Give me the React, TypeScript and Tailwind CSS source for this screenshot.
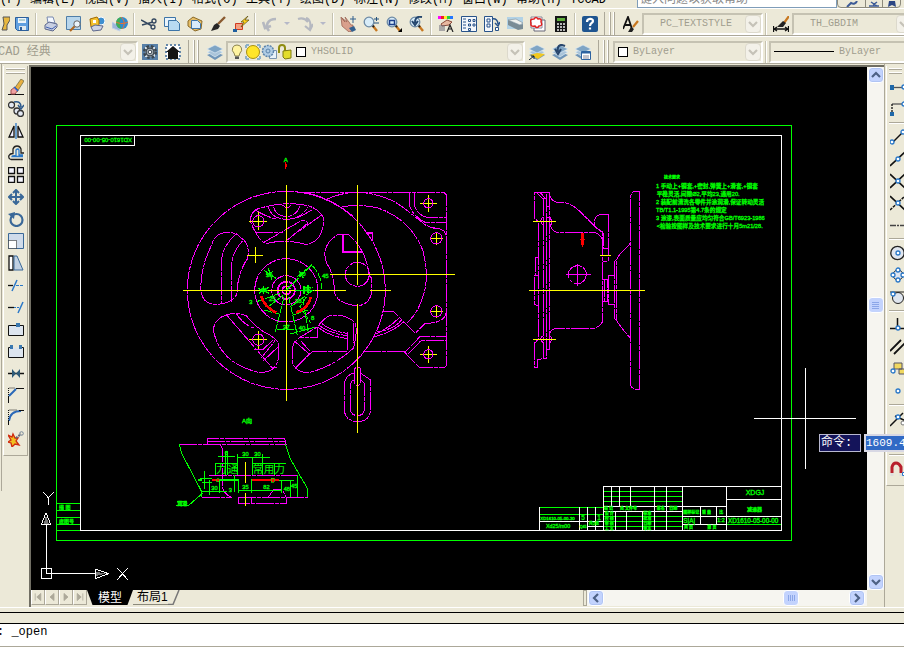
import React from "react";

const MENUS = ["编辑(E)", "视图(V)", "插入(I)", "格式(O)", "工具(T)", "绘图(D)", "标注(N)", "修改(M)", "窗口(W)", "帮助(H)"];

const Icon = ({ children }: { children: React.ReactNode }) => (
  <svg viewBox="0 0 16 16" className="block h-4 w-4 shrink-0" fill="none" aria-hidden="true">
    {children}
  </svg>
);

const lens = (
  <>
    <path d="M10 10l4 5" stroke="#c87820" strokeWidth="2.4" />
    <path d="M9 9l2 2" stroke="#222" strokeWidth="2" />
    <circle cx="6" cy="6" r="4.8" fill="#d8ecf8" stroke="#6d8aa5" strokeWidth="1.3" />
  </>
);

const sheets = (
  <>
    <path d="M0 11l8-3 8 3-8 5z" fill="#6f95b8" />
    <path d="M0 8l8-3 8 3-8 5z" fill="#a9c4da" stroke="#e8f1f8" strokeWidth=".6" />
    <path d="M0 5l8-4 8 4-8 4z" fill="#7fa5c5" stroke="#e8f1f8" strokeWidth=".6" />
  </>
);

const Snap = ({ x, y }: { x: number; y: number }) => (
  <circle cx={x} cy={y} r="2" fill="#fff" stroke="#2a78c8" strokeWidth="1.3" />
);

const icons: Record<string, React.ReactNode> = {
  sheet: <path d="M9 1h7v3l-3 5v5H8l2-6z" fill="#e8b840" stroke="#555" />,
  save: (
    <>
      <path d="M1.5 1.5h13v13h-11l-2-2z" fill="#5f9fe0" stroke="#2d5f9a" />
      <path d="M4 2h8v5H4z" fill="#eef5fb" />
      <path d="M5 10h7v4H5z" fill="#dfe8ee" />
      <path d="M6 11h2v3H6z" fill="#2d5f9a" />
      <path d="M5 4h6" stroke="#7aa" />
    </>
  ),
  plot: (
    <>
      <path d="M5 7l-1-6 6 0 2 6z" fill="#f4f8ff" stroke="#7a8ab0" />
      <path d="M2 9l4-3 8 2v3l-4 4-8-2z" fill="#c8cfe2" stroke="#5c678c" />
      <path d="M3 11l6 2 4-3" stroke="#4060b0" />
    </>
  ),
  preview: (
    <>
      <path d="M.5.5h14v13H.5z" fill="#b8d6ec" stroke="#4f7ea8" />
      <path d="M4 15l5-5" stroke="#b06820" strokeWidth="2.2" />
      <circle cx="11" cy="8" r="3.2" fill="#eaf4fb" stroke="#666" />
    </>
  ),
  publish: (
    <>
      <circle cx="12" cy="5" r="4" fill="#3f8fd0" stroke="#fff" />
      <path d="M1 3l7-2 2 3v6l-8 1z" fill="#f5c22e" stroke="#a26a00" />
      <path d="M4 4h3v3H4z" fill="#fff" />
      <path d="M2 11l4-2 8 1-2 4-8 1z" fill="#cfd4e4" stroke="#5c678c" />
    </>
  ),
  globe: (
    <>
      <path d="M0 6l8 4v5l-8-3z" fill="#9db6d8" stroke="#c6d4e8" />
      <circle cx="10" cy="7" r="6" fill="#2f8bd0" />
      <path d="M10 1a6 6 0 000 12c-3-4-3-8 0-12z" fill="#3fae55" />
      <path d="M4 6c4 2 8 2 12 0M9 1c4 3 4 9 1 12" stroke="#f07030" />
    </>
  ),
  cut: (
    <>
      <path d="M0 4l11 6M1 9l11-3" stroke="#33475f" strokeWidth="1.5" />
      <circle cx="13" cy="5" r="2" stroke="#33475f" strokeWidth="1.3" />
      <circle cx="12" cy="11" r="2" stroke="#33475f" strokeWidth="1.3" />
    </>
  ),
  copy: (
    <>
      <path d="M.5 1.5h11v9H.5z" fill="#eaf4fb" stroke="#3d75a8" />
      <path d="M4.500 4.500h8l3 3v7h-11z" fill="#b8daf2" stroke="#3d75a8" />
    </>
  ),
  paste: (
    <>
      <path d="M1 5l5-4 9 4-1 8-6 2-7-5z" fill="#e6bd66" stroke="#8a6a28" />
      <path d="M4.500 4.500h6l3 3v5h-9z" fill="#d8ecfa" stroke="#3d75a8" />
    </>
  ),
  brush: (
    <>
      <path d="M15 1L8 8" stroke="#8a5a30" strokeWidth="2.4" />
      <path d="M1 15l3-6 3-2 3 3-2 3z" fill="#262626" />
    </>
  ),
  match: (
    <>
      <path d="M2.500 7.500h7v6h-7z" fill="#f4a080" stroke="#d03a20" />
      <path d="M15 0L8 6h3l-3 5 8-7h-4z" fill="#ffd21a" stroke="#5a4a10" strokeWidth=".7" />
      <path d="M0 13h4v3H0z" fill="#1f5f9f" />
    </>
  ),
  undo: <path d="M7 15C3 10 5 3 14 3M1 6l2 6 6-2" stroke="#b5b8c0" strokeWidth="2.6" />,
  redo: <path d="M9 2C13 3 14 8 13 13M1 3q6-2 10 3M8 10l5 4 3-6" stroke="#b5b8c0" strokeWidth="2.2" />,
  pan: (
    <>
      <path d="M1 1l4 5-3-4 5 4-2-5 4 5 2 3 2 0-1 6-3 1-7-6z" fill="#d9a08c" stroke="#9c6656" strokeWidth=".8" />
      <path d="M9 12l5-2 2 4-4 2z" fill="#33608e" />
      <path d="M13 0v7M10 3h6" stroke="#33608e" />
    </>
  ),
  zoomrt: (
    <>
      {lens}
      <path d="M11 3h5M13.500 1v4M11 7h5" stroke="#24527e" />
    </>
  ),
  zoomwin: (
    <>
      {lens}
      <path d="M3.500 4.500h5v4h-5z" stroke="#1d3f8a" strokeWidth="1.5" />
      <path d="M16 12v4h-4z" fill="#000" />
    </>
  ),
  zoomprev: (
    <>
      {lens}
      <path d="M13 1C7 0 6 3 6 7M3 5l3 4 3-4" stroke="#24466e" strokeWidth="2" />
    </>
  ),
  props: (
    <>
      <path d="M0 0h3v3H0z" fill="#f0f" />
      <path d="M3 0h3v3H3z" fill="#e22" />
      <path d="M6 0h3v3H6z" fill="#fe2" />
      <path d="M9 0h3v3H9z" fill="#2c4" />
      <path d="M12 0h3v3h-3z" fill="#27f" />
      <path d="M3 8l6-4 5 2-3 3-7 1z" fill="#e7b8a0" stroke="#8a4a3a" />
      <path d="M1 10h6M1 12h6M1 14h6" stroke="#667" />
      <path d="M9 16l3-7 3 7M10 13h4" stroke="#222" strokeWidth="1.2" />
    </>
  ),
  center: (
    <>
      <path d="M.5.5h15v15H.5z" fill="#f4f7fb" stroke="#28538a" />
      <path d="M2 3h3M2 6h3M2 9h3M2 12h3" stroke="#28538a" />
      <path d="M7.500 3.500h2v2h-2zM12 3.500h2v2h-2zM7.500 8h2v2h-2zM12 8h2v2h-2zM7.500 12.500h2v2h-2z" stroke="#28538a" />
    </>
  ),
  palettes: (
    <>
      <path d="M.5.5h8v15h-8z" fill="#f4f7fb" stroke="#28538a" />
      <path d="M3 3h3v3H3zM3 8h3v3H3z" stroke="#28538a" />
      <path d="M8 3c4-1 6 2 6 5M11 7l3 3 2-4" stroke="#28538a" strokeWidth="1.5" />
      <path d="M11.500 11.500h3v3h-3z" fill="#fff" stroke="#28538a" />
    </>
  ),
  sheetset: (
    <>
      <path d="M0 1h16v12H0z" fill="#b2d2e6" />
      <path d="M1 4l12 5 3-1v5l-5 1L1 9z" fill="#7a8c96" />
      <path d="M1 4l8-1 7 4-3 2z" fill="#eef0ee" stroke="#7a8c96" strokeWidth=".6" />
    </>
  ),
  markup: (
    <>
      <path d="M4 4h11v11H4z" fill="#fff" stroke="#667" />
      <path d="M1 1h11v11H1z" fill="#fff" stroke="#889" />
      <path d="M4 3q2-3 4 0 4-1 3 3 2 4-2 4-2 3-4 0-5 1-4-3-2-4 3-4z" stroke="#e02020" strokeWidth="1.5" />
    </>
  ),
  calc: (
    <>
      <path d="M2 0h12v16H2z" fill="#161616" />
      <path d="M4 2h8v3H4z" fill="#5fae3c" />
      <path d="M4 8h8M4 11h8M4 14h8" stroke="#eee" strokeWidth="1.4" strokeDasharray="2 1" />
    </>
  ),
  help: (
    <>
      <rect width="16" height="16" rx="2" fill="#1f5590" />
      <path d="M5 6c0-4 6-4 6-1 0 2-3 2-3 5M8 11.500v2" stroke="#fff" strokeWidth="2.2" />
    </>
  ),
  textstyle: (
    <>
      <path d="M0 13L5 1l4 12M2 9h6" stroke="#111" strokeWidth="1.8" />
      <path d="M15 5l-5 6" stroke="#c87820" strokeWidth="2.2" />
      <path d="M5 16l3-5 3 2-2 3z" fill="#222" />
    </>
  ),
  dimstyle: (
    <>
      <path d="M16 0l-5 7" stroke="#c87820" strokeWidth="2.2" />
      <path d="M4 11l6-6 3 2-3 4z" fill="#222" />
      <path d="M.5 10v6M15.500 10v6M1 13h14M4 11l-3 2 3 2M12 11l3 2-3 2" stroke="#111" strokeWidth="1.3" />
    </>
  ),
  gear: (
    <>
      <path d="M0 0h16v16H0z" fill="#5880a8" />
      <path d="M3 3h10v10H3z" fill="#dfe5ea" />
      <circle cx="8" cy="8" r="5.800" stroke="#3a4650" strokeWidth="2.6" strokeDasharray="2.6 2" />
      <circle cx="8" cy="8" r="4" fill="#a8b0b6" stroke="#3a4650" strokeWidth="1.5" />
      <circle cx="8" cy="8" r="1.800" fill="#fff" stroke="#3a4650" />
    </>
  ),
  house: (
    <>
      <path d="M1 1h14v14H1z" fill="#fff" stroke="#6688aa" strokeWidth="2" strokeDasharray="2 2" />
      <path d="M8 2l7 6h-2v7H3V8H1z" fill="#151515" />
    </>
  ),
  layers: sheets,
  bulb: (
    <>
      <path d="M8 1a4.500 4.500 0 00-3 8l1 3h4l1-3a4.500 4.500 0 00-3-8z" fill="#fff3a0" stroke="#8c8450" />
      <path d="M6 12.500h4v2.500H6z" fill="#555" />
    </>
  ),
  sun: (
    <>
      <path d="M1 1h14v14H1z" stroke="#8cb0c8" strokeWidth="2" strokeDasharray="3 8 3 0" />
      <circle cx="8" cy="8" r="6.500" fill="#ffe52a" stroke="#a89010" />
    </>
  ),
  frozen: (
    <>
      <path d="M8.500 6.500h7v8h-7z" fill="#e8f2fa" stroke="#7a94b0" />
      <circle cx="7" cy="7" r="5.500" fill="#b0cce4" stroke="#5c84ac" strokeWidth="1.5" strokeDasharray="2 1" />
      <circle cx="7" cy="7" r="2" stroke="#5c84ac" />
    </>
  ),
  lock: (
    <>
      <path d="M2 9V4q0-3 3-3t3 3v4" stroke="#8f8c10" strokeWidth="2" />
      <path d="M6 7l8-1v8l-6 1-2-2z" fill="#e3dd2c" stroke="#7f7c10" />
    </>
  ),
  current: (
    <>
      {sheets}
      <path d="M1 11l7-2 8 1-7 5z" fill="#f2c81e" />
      <path d="M0 16l5-4M2 12h3v3" stroke="#123" />
    </>
  ),
  layprev: (
    <>
      {sheets}
      <path d="M13 2C7-1 5 3 6 8M3 5l3 5 3-5" stroke="#28466c" strokeWidth="2" />
    </>
  ),
  states: (
    <>
      {sheets}
      <path d="M6.500 7.500h9v8h-9z" fill="#fff" stroke="#2d62a0" />
      <path d="M7 8.500h8" stroke="#2d62a0" strokeWidth="2" />
      <path d="M8 12h6M8 14h6" stroke="#889" />
    </>
  ),

  erase: (
    <>
      <path d="M0 15.500h16" stroke="#111" />
      <path d="M6 10L13 0l3 2-7 11z" fill="#e8b040" stroke="#664" strokeWidth=".7" />
      <path d="M3 11l4-3 3 3-3 4-4 0z" fill="#f0a0a0" stroke="#a05050" />
      <path d="M6 8l4 4" stroke="#26c" strokeWidth="1.5" />
    </>
  ),
  copyobj: (
    <>
      <g fill="#e2e8f2" stroke="#333" strokeWidth="1.3">
        <circle cx="3.500" cy="4" r="3" />
        <circle cx="9" cy="10" r="3" />
        <circle cx="12.500" cy="12.500" r="3" />
      </g>
      <path d="M6 1c5-1 7 1 7 5M10 4l3 4 3-4" stroke="#2d5a8c" strokeWidth="1.5" />
    </>
  ),
  mirror: (
    <>
      <path d="M6 3v11H1zM10 3v11h5z" fill="#eef" stroke="#111" strokeWidth="1.3" />
      <path d="M8 0v16" stroke="#2a78c8" strokeWidth="1.3" />
    </>
  ),
  offset: (
    <>
      <path d="M15 14.500H3q-3-1-2-4 1-2 4-2V4q1-3 4-3t4 3v4h3" stroke="#222" strokeWidth="1.3" />
      <path d="M15 11.500H4q0-1 4-1V5q2-2 3 0v5h4" stroke="#2a78c8" strokeWidth="1.3" />
    </>
  ),
  array: <path d="M.5.5h6v6h-6zM9.500.5h6v6h-6zM.5 9.500h6v6h-6zM9.500 9.500h6v6h-6z" fill="#f6f6ff" stroke="#111" strokeWidth="1.3" />,
  move: <path d="M8 1v14M1 8h14M5 4l3-3 3 3M5 12l3 3 3-3M4 5L1 8l3 3M12 5l3 3-3 3" stroke="#3a6898" strokeWidth="2" />,
  rotate: (
    <>
      <circle cx="8.500" cy="9" r="6" stroke="#3a6898" strokeWidth="2.2" />
      <path d="M0 3l7-2-1 7z" fill="#3a6898" />
    </>
  ),
  scale: (
    <>
      <path d="M.5.5h15v15H.5z" fill="#cfdbea" stroke="#3a6898" />
      <path d="M.5 7.500h8v8h-8z" fill="#fff" stroke="#111" strokeDasharray="1 1" />
    </>
  ),
  stretch: (
    <>
      <path d="M1 1h4v14H1z" fill="#fff" stroke="#111" strokeWidth="1.3" />
      <path d="M6 1h3l6 14H6z" fill="#c0d0e2" stroke="#3a6898" />
    </>
  ),
  trim: (
    <>
      <path d="M0 8.500h5" stroke="#111" strokeWidth="1.3" />
      <path d="M4 14L9 3" stroke="#2a78c8" strokeWidth="1.5" />
      <path d="M8 8.500h8" stroke="#2a78c8" strokeDasharray="3 1" />
    </>
  ),
  extend: (
    <>
      <path d="M0 8.500h6" stroke="#111" strokeWidth="1.3" />
      <path d="M10 14l5-11" stroke="#2a78c8" strokeWidth="1.5" />
      <path d="M6 8.500h6" stroke="#2a78c8" strokeDasharray="2 1" />
    </>
  ),
  breakpt: (
    <>
      <path d="M.5 4.500h15v10H.5z" fill="#dde5ef" stroke="#111" />
      <path d="M8 2h4v4H8z" fill="#3a78b0" />
    </>
  ),
  breaktwo: (
    <>
      <path d="M2 4.500H.5v10h15v-10H14" fill="#dde5ef" stroke="#111" />
      <path d="M2 2h3v4H2zM11 2h3v4h-3z" fill="#3a78b0" />
    </>
  ),
  join: (
    <>
      <path d="M0 8.500h16" stroke="#111" strokeWidth="1.5" />
      <path d="M4 4l4 4.500L4 13zM12 4L8 8.500l4 4.500z" fill="#2d5a78" />
    </>
  ),
  chamfer: (
    <>
      <path d="M1 9l7-7" stroke="#2a68b8" strokeWidth="2" />
      <path d="M.5 16V9M8 1.500h8" stroke="#111" />
      <path d="M.5 8V1h7" stroke="#111" strokeDasharray="1 1" />
    </>
  ),
  fillet: (
    <>
      <path d="M1 12Q2 2 13 2" stroke="#2a68b8" strokeWidth="2" />
      <path d="M.5 16v-5M11 1.500h5" stroke="#111" />
      <path d="M.5 10V1h9" stroke="#111" strokeDasharray="1 1" />
    </>
  ),
  explode: (
    <>
      <path d="M0 4l4 2 1-3 2 4 3 0-2 3 3 4-4-1-3 3-1-4-3-1 3-2z" fill="#f0c020" stroke="#d02a10" strokeWidth="1.3" />
      <path d="M8 7l5-4" stroke="#667" strokeWidth="2" strokeDasharray="2 1" />
      <circle cx="13.500" cy="2.500" r="1.800" stroke="#789" />
    </>
  ),

  track: (
    <>
      <path d="M2 8.500h12" stroke="#555" strokeWidth="1.3" />
      <path d="M0 6h4v5H0z" fill="#1f68a8" />
      <Snap x={14} y={8} />
    </>
  ),
  from: (
    <>
      <path d="M2 3h12" stroke="#555" strokeWidth="1.3" />
      <path d="M2 3v9" stroke="#111" strokeWidth="1.3" strokeDasharray="2 1" />
      <path d="M0 11h4v4H0z" fill="#1f68a8" />
      <Snap x={14} y={3} />
    </>
  ),
  endpoint: (
    <>
      <path d="M3 13L14 2" stroke="#111" strokeWidth="1.5" />
      <Snap x={2} y={13} />
      <Snap x={13} y={3} />
    </>
  ),
  midpoint: (
    <>
      <path d="M0 15L15 1" stroke="#111" strokeWidth="1.7" />
      <Snap x={8} y={8} />
    </>
  ),
  intersect: (
    <>
      <path d="M0 1l15 14M0 15L15 1" stroke="#111" strokeWidth="1.7" />
      <Snap x={8} y={8} />
    </>
  ),
  apparent: (
    <>
      <path d="M0 1l15 14" stroke="#111" strokeWidth="1.7" />
      <path d="M0 15L15 1" stroke="#111" strokeWidth="1.5" strokeDasharray="3 1" />
      <Snap x={8} y={8} />
    </>
  ),
  extension: <path d="M0 8.500h16" stroke="#444" strokeWidth="1.5" strokeDasharray="6 1 2 1" />,
  centre: (
    <>
      <circle cx="7.500" cy="8" r="6.700" fill="#dfe5ee" stroke="#222" strokeWidth="1.3" />
      <Snap x={8} y={8} />
    </>
  ),
  quadrant: (
    <>
      <circle cx="8" cy="8" r="5" fill="#dfe5ee" stroke="#222" />
      <Snap x={8} y={3} />
      <Snap x={8} y={13} />
      <Snap x={3} y={8} />
      <Snap x={13} y={8} />
    </>
  ),
  tangent: (
    <>
      <circle cx="8" cy="9" r="5.500" fill="#dfe5ee" stroke="#222" />
      <path d="M0 3h14" stroke="#222" />
      <Snap x={3} y={5} />
    </>
  ),
  perp: (
    <>
      <path d="M0 11.500h16M7.500 1v10" stroke="#111" strokeWidth="1.5" />
      <Snap x={8} y={11} />
    </>
  ),
  parallel: <path d="M0 12L11 1M4 15L15 4" stroke="#111" strokeWidth="1.8" />,
  insert: (
    <>
      <path d="M4 2h8v6H4zM9 8h6v5H9z" fill="#f0d860" stroke="#556" />
      <Snap x={3} y={10} />
    </>
  ),
  node: <Snap x={8} y={8} />,
  nearest: (
    <>
      <path d="M0 15L13 2M5 5l11 5" stroke="#111" strokeWidth="1.5" />
      <circle cx="13" cy="12" r="2" fill="#fff" stroke="#777" />
      <Snap x={8} y={6} />
    </>
  ),
  none: <circle cx="8" cy="8" r="5" fill="#ddd" stroke="#777" />,
  magnet: (
    <>
      <path d="M2 12V6q1-4 4-4t5 4v6" stroke="#b8202c" strokeWidth="3" />
      <path d="M.5 13.500h3M9.500 13.500h3" stroke="#ddd" strokeWidth="3" />
      <path d="M12.500 11.500h3v3h-3z" fill="#fff" stroke="#2a78c8" />
    </>
  ),
};

const ToolButton = ({ name, small }: { name: string; small?: boolean }) => (
  <button
    type="button"
    aria-label={name}
    className={small ? "flex h-[22px] w-4 shrink-0 items-center" : "flex h-[22px] w-[23px] shrink-0 items-center justify-center"}
  >
    <Icon>{icons[name]}</Icon>
  </button>
);

const Sep = () => (
  <div className="flex h-[22px] w-[6px] shrink-0 justify-center">
    <div className="w-[2px] border-l border-r border-l-[#c5c2b0] border-r-white" />
  </div>
);

const Grip = () => (
  <div className="flex h-full shrink-0 gap-[2px] border-l border-[#aca899] pl-1 pr-1">
    <div className="w-[2px] border-l border-r border-l-white border-r-[#aca899]" />
    <div className="w-[2px] border-l border-r border-l-white border-r-[#aca899]" />
  </div>
);

const MenuArrow = () => (
  <svg viewBox="0 0 6 3" className="h-[3px] w-[6px]" aria-hidden="true">
    <path d="M0 0h6L3 3z" fill="#b5b8c8" />
  </svg>
);

const Chevron = ({ color = "#c5c2b8", turn = "" }: { color?: string; turn?: string }) => (
  <svg viewBox="0 0 10 10" className={`h-[10px] w-[10px] ${turn}`} fill="none" aria-hidden="true">
    <path d="M1 3l4 4 4-4" stroke={color} strokeWidth="2.2" />
  </svg>
);

type DropProps = { label: string; value: string; width: string; pad: string; text?: string; children?: React.ReactNode };

const Drop = ({ label, value, width, pad, text = "text-[10px]", children }: DropProps) => (
  <div className={`relative flex h-[22px] shrink-0 items-center ${width}`}>
    <select
      aria-label={label}
      defaultValue={value}
      className={`h-[22px] w-full appearance-none border-2 border-b-white border-l-[#c5c2b2] border-r-white border-t-[#c5c2b2] bg-[#ece9d8] font-['Liberation_Mono','Noto_Sans_CJK_SC',monospace] text-[#a09d8e] outline-none ${text} ${pad}`}
    >
      <option>{value}</option>
    </select>
    {children && <div className="pointer-events-none absolute left-[3px] flex items-center">{children}</div>}
    <span className="pointer-events-none absolute right-[2px] flex h-[18px] w-4 items-center justify-center rounded-sm border border-[#dcd9cc] bg-[#f3f1e9]">
      <Chevron />
    </span>
  </div>
);

const Cross = ({ x, y, r = 20, hole = 0 }: { x: number; y: number; r?: number; hole?: number }) => (
  <>
    <path d={`M${x - r} ${y}h${r * 2}M${x} ${y - r}v${r * 2}`} stroke="#ff0" />
    {hole > 0 && <circle cx={x} cy={y} r={hole} stroke="#f0f" />}
  </>
);

const FrontView = () => (
  <svg x="180" y="150" width="290" height="290" viewBox="0 0 870 870" overflow="visible">
    <g stroke="#f0f" strokeWidth="3" strokeDasharray="54 3 12 3">
      <circle cx="319" cy="421" r="297" />
      <circle cx="319" cy="421" r="95" />
      <circle cx="319" cy="421" r="44" />
      <circle cx="319" cy="421" r="26" strokeWidth="5" />
      <circle cx="319" cy="421" r="12" strokeWidth="5" />
      <path d="M350 127H792L799 134V645Q799 652 792 652H718L674 607L720 560H799M684 612L724 571H799" />
      <path d="M440 148Q480 128 532 127Q620 130 682 182L738 226" />
      <path d="M480 172Q530 160 590 173Q690 205 728 300Q752 390 723 455Q710 493 680 520" />
      <path d="M370 127Q450 140 520 200" />
      <path d="M688 127V165Q698 198 735 217H799M703 127V165Q712 194 740 202H799" />
      <path d="M740 226Q755 236 775 235Q797 240 799 262" />
      <path d="M607 484H640L706 550L735 520Q797 520 799 484M665 510Q640 540 590 545M658 503Q630 532 588 552M670 516Q640 545 582 561M550 604H674" />
      <path d="M211 215Q210 178 250 172Q320 153 385 167Q432 185 431 215Q425 280 375 283Q320 266 262 280Q240 282 211 215Z" />
      <path d="M265 172Q275 207 319 208Q362 208 383 172M280 170Q288 198 319 200Q350 198 360 168M308 165Q321 180 334 165M225 178Q245 195 290 208M350 205Q380 190 400 177" />
      <path d="M250 278L360 214Q380 206 383 220L322 270M425 195L355 245M225 247H310" />
      <path d="M148 247Q105 245 95 285Q62 350 62 421Q68 462 105 463Q160 462 171 430Q172 370 203 325Q210 280 185 265Q170 248 148 247Z" />
      <path d="M170 250Q125 290 124 340V460M188 272Q155 310 154 350V455" />
      <path d="M165 490Q105 495 100 540Q120 640 235 667Q290 670 296 620V580Q285 560 250 545Q215 520 200 498Q180 490 165 490Z" />
      <path d="M140 495L275 652H290M170 492Q190 525 225 535M243 625L285 572M250 632L295 590M222 597H250L282 568" />
      <path d="M345 575Q335 580 338 640Q350 670 390 667Q460 650 520 595Q535 540 524 517Q495 490 450 497Q430 505 413 530L360 562Z" />
      <path d="M413 530V562H360M418 527Q450 550 500 557M425 520Q455 545 502 550M415 533Q450 560 500 565M503 545V600M520 520V580" />
      <path d="M345 575L388 612L348 652M362 572L388 602M388 612L400 604H500" />
      <path d="M475 253H505Q560 300 567 375L575 385V430Q565 467 530 467Q465 460 463 421Q462 370 440 340Q420 285 475 253Z" />
      <circle cx="532" cy="373" r="36" />
      <rect x="523" y="652" width="19" height="54" rx="9" />
      <path d="M542 670L572 690V780Q568 815 532 815Q495 812 493 780V700Q500 672 523 670" />
      <path d="M542 690L553 700V780Q550 797 532 797Q513 795 511 780V705Q515 690 523 690" />
    </g>
    <path d="M489 253V306H548M558 248H577V273" stroke="#f0f" strokeWidth="5" />
    <g stroke="#ff0" strokeWidth="3">
      <path d="M319 105V752M532 105V404M532 462V848M9 421H497M569 421H632M450 373H825" />
      <Cross x={745} y={160} r={26} hole={14} />
      <Cross x={769} y={265} hole={17} />
      <Cross x={769} y={484} hole={17} />
      <Cross x={745} y={613} r={26} hole={14} />
      <Cross x={235} y={214} r={27} hole={17} />
      <Cross x={235} y={569} r={27} hole={17} />
      <Cross x={226} y={316} r={24} />
    </g>
    <g stroke="#0f0" strokeWidth="3" strokeDasharray="24 4">
      <path d="M319 421L395 345Q426 375 424 418M312 440L285 548M326 440L352 556M290 538H350M230 455L300 430M335 468L400 420M268 468L315 432" />
      <path d="M368 440L385 548M380 440L360 470L392 518M330 552L404 532M340 495L385 480M252 480L300 493M345 421H405" />
      <path d="M253 362L288 385M258 375L283 362M265 355L276 390M352 380L383 355M358 362L372 388" />
      <path d="M234 415L268 430M236 430L266 412M250 408V436M240 421H266M372 408V435M384 404V430M368 412H398" strokeWidth="4" />
    </g>
    <path d="M243 437Q252 470 288 488M348 488Q385 475 393 440" stroke="#f00" strokeWidth="8" />
    <path d="M317 35V56M320 42V52" stroke="#f00" strokeWidth="3" />
    <g fill="#0f0" stroke="#0f0" fontSize="18">
      <text x="311" y="35">A</text>
      <text x="186" y="818">A向</text>
      <text x="426" y="384">45</text>
      <text x="207" y="463">3</text>
      <text x="309" y="537">37</text>
      <text x="356" y="539">40</text>
      <text x="393" y="511">8</text>
      <text x="345" y="459">38</text>
      <text x="267" y="452">25</text>
      <text x="257" y="380">30</text>
      <text x="357" y="378">30</text>
      <text x="241" y="427">46</text>
      <text x="373" y="423">12</text>
    </g>
  </svg>
);

const SideView = () => (
  <svg x="510" y="120" width="290" height="280" viewBox="0 0 870 840" overflow="visible">
    <g stroke="#f0f" strokeWidth="3" strokeDasharray="54 3 12 3">
      <path d="M118 217H73V295L85 304V658L73 670V742H82V718H92L95 715H109V217M100 235V715M118 217V688H109M109 235H97L82 220M90 217L106 235M109 259H118" />
      <path d="M97 292L91 304L100 317M97 648L91 658L100 670M109 292H120Q126 300 124 315M118 645L126 655L120 669" />
      <path d="M118 225Q125 243 140 247H163Q190 255 205 270L262 326Q279 332 278 355V545M118 300Q122 333 140 337H245Q270 338 278 360" />
      <path d="M268 333Q281 330 281 350V385M295 283H270Q250 290 253 315L262 327M295 283V424H278M278 385H295" />
      <path d="M118 640Q125 628 137 625H250Q276 620 278 600V545H293V478H278M295 466V553H313M295 466H313M282 478V545" />
      <path d="M85 412H76V466H73V553L85 557M76 466H85" />
      <path d="M313 424V595L319 600V420L313 424M319 420Q325 405 340 392L361 370M319 600Q330 620 361 654" />
      <path d="M361 795V230Q365 215 375 214H388V808H378Q363 803 361 795Z" />
      <circle cx="202" cy="464" r="27" />
    </g>
    <path d="M168 463H243M202 432V498" stroke="#f0f" strokeWidth="3" />
    <path d="M57 511H405M69 304H138M69 658H138M270 406H303" stroke="#ff0" strokeWidth="3" />
    <path d="M217 339V374" stroke="#f00" strokeWidth="9" />
    <path d="M210 359H225M217 374V381" stroke="#f00" strokeWidth="4" />
    <g fill="#0f0" stroke="#0f0" fontSize="17">
      <text x="462" y="178" fontSize="12">技术要求</text>
      <text x="438" y="203">1 手动上+铜套,+密封,弹簧上+滑套,+铜套</text>
      <text x="440" y="227">平稳灵活,间隙Ø2,平均23,通用20.</text>
      <text x="438" y="251">2 装配前清洗各零件并涂润滑,保证转动灵活</text>
      <text x="438" y="276">TB/T1.1-1995第4.7条的规定</text>
      <text x="438" y="300">3 涂漆,表面质量应均匀符合GB/T6923-1986</text>
      <text x="440" y="324">&lt;检验按图样及技术要求进行十月5m21/28.</text>
    </g>
  </svg>
);

const DetailView = () => (
  <svg x="160" y="410" width="170" height="110" viewBox="0 0 510 330" overflow="visible">
    <path
      d="M142 103V85H374L378 103M142 94H376M58 103H380M180 103Q190 115 188 135V235Q195 255 215 262M148 196H415M125 262H215M235 262H443M235 262V280H379V262M274 262V280M325 262L340 239H367L379 262"
      stroke="#f0f"
      strokeWidth="3"
      strokeDasharray="54 3 12 3"
    />
    <path d="M58 103L65 130L125 245V262M376 103L390 145L442 235V262M130 248L86 286H48M51 275H82" stroke="#0f0" strokeWidth="3" />
    <path
      d="M174 139H225M196 124V196M203 124V196M166 160V196M166 160H232M232 133V196M232 142H330M277 142V196M308 133V196M277 160H378M343 160V196M119 206H155M133 184V236M125 217H155M148 210V254M178 206V248M127 244H200M224 196V245M235 210V250M235 242H365M274 208V250M364 211V248M355 211H402M391 211V262M412 196V262"
      stroke="#0f0"
      strokeWidth="3"
    />
    <path d="M178 210H236M115 210H125" stroke="#0f0" strokeWidth="6" />
    <path d="M155 211H178M275 210H357" stroke="#f00" strokeWidth="6" />
    <path d="M170 206h8v9h-8zM334 205h8v12h-8z" stroke="#0f0" strokeWidth="2" fill="#f00" />
    <path d="M256 156V218M256 249V288" stroke="#ff0" strokeWidth="3" />
    <g fill="#0f0" stroke="#0f0" fontSize="17">
      <text x="247" y="137">30</text>
      <text x="283" y="137">30</text>
      <text x="194" y="136">6</text>
      <g fontSize="32" strokeWidth="0">
        <text x="168" y="190">力</text>
        <text x="203" y="190">通</text>
        <text x="278" y="190">常</text>
        <text x="311" y="190">用</text>
        <text x="343" y="190">力</text>
      </g>
      <text x="154" y="239">30</text>
      <text x="206" y="246">3</text>
      <text x="247" y="237">35</text>
      <text x="310" y="237">82</text>
      <text x="371" y="242">48</text>
      <text x="393" y="234">45</text>
      <text x="52" y="285" fontSize="15">润滑</text>
    </g>
  </svg>
);

const TitleBlock = () => (
  <svg x="530" y="470" width="270" height="80" viewBox="0 0 810 240" overflow="visible">
    <path
      d="M220 64H457M220 79H457M220 94H457M220 139H457M220 154H457M220 169H457M589 163H754M28 112H220M28 133H220"
      stroke="#0f0"
      strokeWidth="3"
    />
    <path
      d="M220 49H754M220 49V181M244 49V109M268 49V109M301 49V109M373 49V181M409 49V181M457 49V181M589 49V181M754 49V181M220 109H589M589 88H754M220 124H457M457 139H754M457 163H589M256 124V181M289 124V181M337 124V181M511 109V163M559 109V163M28 112V181M148 112V181M172 112V181M196 112V181M28 154H220M172 169H220"
      stroke="#fff"
      strokeWidth="3"
    />
    <g fill="#0f0" stroke="#0f0" fontSize="12">
      <text x="647" y="76" fontSize="21">XDGJ</text>
      <text x="651" y="124" fontSize="15">减速器</text>
      <text x="594" y="158" fontSize="19">XD1610-05-00-00</text>
      <text x="31" y="150" fontSize="13">XD1610-05-00-30</text>
      <text x="48" y="175" fontSize="16">Xd25/m00</text>
      <text x="154" y="150" fontSize="19">5</text>
      <text x="202" y="150" fontSize="19">1</text>
      <text x="149" y="173" fontSize="11">Q45</text>
      <text x="176" y="166">共2张</text>
      <text x="222" y="121">标 记</text>
      <text x="270" y="121">处 文件号</text>
      <text x="380" y="121">签名</text>
      <text x="418" y="121">日期</text>
      <text x="224" y="136">设 计</text>
      <text x="224" y="151">校 核</text>
      <text x="224" y="166">审 核</text>
      <text x="224" y="179">工 艺</text>
      <text x="340" y="136">标准</text>
      <text x="340" y="151">批准</text>
      <text x="340" y="166">日期</text>
      <text x="340" y="179">审定</text>
      <text x="460" y="131">图样标记</text>
      <text x="516" y="131">重 量</text>
      <text x="568" y="131">比</text>
      <text x="460" y="158" fontSize="19">S|A|</text>
      <text x="562" y="157" fontSize="16">1:2</text>
      <text x="462" y="178">共 页</text>
      <text x="532" y="178">第 页</text>
    </g>
  </svg>
);

const UcsIcon = () => (
  <svg x="0" y="480" width="240" height="170" viewBox="0 0 720 510" overflow="visible">
    <path
      d="M139 280V133M139 280H286M124 265H155V296H124ZM124 133L138 98L152 133ZM286 267V296L325 281ZM129 36L145 53L161 36M145 53V75M352 264L383 299M383 264L352 299"
      stroke="#fff"
      strokeWidth="3"
    />
    <path d="M138 105L146 131H132ZM288 275L318 281L288 288Z" fill="#777" />
  </svg>
);

const Drawing = () => (
  <svg
    viewBox="31 67 836 523"
    preserveAspectRatio="xMinYMin meet"
    className="block h-full w-full font-['Liberation_Sans','Noto_Sans_CJK_SC',sans-serif]"
    fill="none"
    shapeRendering="crispEdges"
    role="img"
    aria-label="XD1610-05-00-00"
  >
    <path d="M56 125.500H791.500V540.500H56.500V125M57 503.500H80M57 510.500H80M57 517.500H80M57 524.500H80M57 530.500H80" stroke="#0f0" />
    <path d="M80.500 135.500H781.500V530.500H80.500V135M80 145.500H134.500V135" stroke="#fff" />
    <g fill="#0f0" stroke="#0f0" strokeWidth="0.300" fontSize="6">
      <text transform="translate(132 138) rotate(180)">XD1610-05-00-00</text>
      <text x="59" y="509" fontSize="5">描 图</text>
      <text x="59" y="523" fontSize="5">底图号</text>
    </g>
    <FrontView />
    <SideView />
    <DetailView />
    <TitleBlock />
    <UcsIcon />
    <path d="M754 418.500H856M805.500 368V469" stroke="#fff" />
  </svg>
);

const ScrollButton = ({ label, turn }: { label: string; turn: string }) => (
  <button
    type="button"
    aria-label={label}
    className="flex h-4 w-4 shrink-0 items-center justify-center rounded-sm border border-white bg-[#c3d3fd] shadow-[inset_0_0_0_1px_#b0c4f4]"
  >
    <Chevron color="#4d6185" turn={turn} />
  </button>
);

const LEFT_TOOLS = [
  "erase", "copyobj", "mirror", "offset", "array", "move", "rotate", "scale", "stretch",
  "trim", "extend", "breakpt", "breaktwo", "join", "chamfer", "fillet", "explode",
];

const RIGHT_TOOLS = [
  ["track", "from"],
  ["endpoint", "midpoint", "intersect", "apparent", "extension"],
  ["centre", "quadrant", "tangent"],
  ["perp", "parallel", "insert", "node"],
  ["nearest", "none"],
  ["magnet"],
];

const RowGrip = () => (
  <div className="flex h-[10px] shrink-0 flex-col gap-[2px] px-[2px] pt-[2px]">
    <div className="h-[2px] border-b border-t border-b-[#aca899] border-t-white" />
    <div className="h-[2px] border-b border-t border-b-[#aca899] border-t-white" />
  </div>
);

const MenuBar = () => (
  <div className="flex h-2 shrink-0 items-end overflow-hidden font-['Liberation_Mono','Noto_Sans_CJK_SC',monospace] text-[12px] leading-4 text-black">
    <button type="button" className="w-[30px] shrink-0 whitespace-nowrap text-left">(F)</button>
    {MENUS.map((menu) => (
      <button key={menu} type="button" className="w-[54px] shrink-0 whitespace-nowrap text-left">
        {menu}
      </button>
    ))}
    <button type="button" className="w-[67px] shrink-0 whitespace-nowrap text-left">YCCAD</button>
    <input
      aria-label="帮助"
      placeholder="键入问题以获取帮助"
      className="h-4 w-[200px] shrink-0 border border-[#7f9db9] bg-white px-[2px] text-[12px] placeholder:text-[#8a8a8a]"
    />
    <div className="flex h-4 shrink-0 rounded-b-sm border border-[#8c8a7c]">
      <button type="button" aria-label="搜索" className="flex w-7 items-end justify-center border-r border-[#8c8a7c]">
        <svg viewBox="0 0 12 6" className="h-[6px] w-3" aria-hidden="true">
          <path d="M1 6l4-4q4 2 6-2" stroke="#3c5a96" strokeWidth="2" fill="none" />
        </svg>
      </button>
      <button type="button" aria-label="通讯中心" className="flex w-[17px] items-end justify-center border-r border-[#8c8a7c]">
        <svg viewBox="0 0 12 6" className="h-[6px] w-3" aria-hidden="true">
          <path d="M1 5h10M3 1l6 4M9 1L5 4" stroke="#3c5a96" strokeWidth="1.5" />
        </svg>
      </button>
      <button type="button" aria-label="收藏夹" className="flex w-[17px] items-end justify-center">
        <svg viewBox="0 0 12 6" className="h-[6px] w-3" aria-hidden="true">
          <path d="M2 6l1-6h6l1 6-4-2z" fill="#2c4684" />
        </svg>
      </button>
    </div>
  </div>
);

const StandardBar = () => (
  <div className="flex h-7 shrink-0 items-center overflow-hidden border-b border-t border-b-[#aca899] border-t-white pt-[3px]">
    <div className="flex w-[10px] shrink-0 justify-end overflow-hidden">
      <ToolButton name="sheet" small />
    </div>
    <ToolButton name="save" />
    <Sep />
    {["plot", "preview", "publish", "globe"].map((n) => <ToolButton key={n} name={n} />)}
    <Sep />
    {["cut", "copy", "paste", "brush", "match"].map((n) => <ToolButton key={n} name={n} />)}
    <Sep />
    <ToolButton name="undo" />
    <button type="button" aria-label="undo list" className="flex w-3 shrink-0 justify-center">
      <MenuArrow />
    </button>
    <ToolButton name="redo" />
    <button type="button" aria-label="redo list" className="flex w-[14px] shrink-0 justify-center">
      <MenuArrow />
    </button>
    <Sep />
    {["pan", "zoomrt", "zoomwin", "zoomprev"].map((n) => <ToolButton key={n} name={n} />)}
    <Sep />
    {["props", "center", "palettes", "sheetset", "markup", "calc"].map((n) => <ToolButton key={n} name={n} />)}
    <Sep />
    <ToolButton name="help" />
    <div className="w-[3px] shrink-0" />
    <Grip />
    <ToolButton name="textstyle" />
    <Drop label="文字样式" value="PC_TEXTSTYLE" width="w-[121px]" pad="pl-4" />
    <Sep />
    <ToolButton name="dimstyle" />
    <Drop label="标注样式" value="TH_GBDIM" width="w-[122px]" pad="pl-4" />
  </div>
);

const LayerBar = () => (
  <div className="flex h-7 shrink-0 items-center overflow-hidden border-b border-t border-b-[#aca899] border-t-white pt-[3px]">
    <Drop label="工作空间" value="CAD 经典" width="-ml-1 w-[142px]" pad="pl-0" text="text-[12px]" />
    <ToolButton name="gear" />
    <ToolButton name="house" />
    <div className="w-1 shrink-0" />
    <Grip />
    <ToolButton name="layers" />
    <Drop label="图层" value="YHSOLID" width="w-[299px]" pad="pl-[83px]">
      <Icon>{icons.bulb}</Icon>
      <Icon>{icons.sun}</Icon>
      <Icon>{icons.frozen}</Icon>
      <Icon>{icons.lock}</Icon>
      <span className="ml-[3px] h-[10px] w-[10px] border border-black bg-white" />
    </Drop>
    {["current", "layprev", "states"].map((n) => <ToolButton key={n} name={n} />)}
    <div className="w-1 shrink-0" />
    <Grip />
    <Drop label="颜色" value="ByLayer" width="w-[150px]" pad="pl-[18px]">
      <span className="ml-[2px] h-[10px] w-[10px] border border-black bg-white" />
    </Drop>
    <Sep />
    <Drop label="线型" value="ByLayer" width="w-[170px]" pad="pl-[68px]">
      <span className="ml-[2px] h-px w-[60px] bg-black" />
    </Drop>
  </div>
);

const LayoutTabs = () => (
  <div className="flex h-[17px] shrink-0 items-start bg-[#ece9d8]">
    <div className="flex shrink-0">
      {["M4 3v9M11 3v9L6 7.500z", "M10 3v9L5 7.500z", "M5 3v9l5-4.500z", "M4 3v9l5-4.500zM11 3v9"].map((d) => (
        <button key={d} type="button" aria-label="tab" className="h-[15px] w-[14px] border-b border-l border-r border-[#aca899] border-l-white">
          <svg viewBox="0 0 15 15" className="h-full w-full" aria-hidden="true">
            <path d={d} fill="#aca899" stroke="#aca899" />
          </svg>
        </button>
      ))}
    </div>
    <button
      type="button"
      className="h-[15px] w-[46px] shrink-0 bg-black text-center text-[12px] leading-[14px] text-white [clip-path:polygon(0_0,100%_0,88%_100%,12%_100%)]"
    >
      模型
    </button>
    <button type="button" className="h-[15px] shrink-0 border-b border-[#8c8a7c] pl-1 text-[12px] leading-[14px] text-black">
      布局1
    </button>
    <svg viewBox="0 0 12 15" className="h-[15px] w-3 shrink-0" aria-hidden="true">
      <path d="M0 14.500h5L11 0" stroke="#777" fill="none" strokeWidth="1.5" />
    </svg>
    <div className="flex-1" />
    <div className="flex w-[284px] shrink-0 items-center bg-[#f6f5f0]">
      <div className="mr-px h-4 w-1 border border-[#aca899] bg-[#ece9d8]" />
      <ScrollButton label="left" turn="rotate-90" />
      <div className="flex-1" />
      <div className="flex h-4 w-4 items-center justify-center gap-px rounded-sm border border-white bg-[#c3d3fd]">
        <span className="h-[6px] w-px bg-[#8ba6e8]" />
        <span className="h-[6px] w-px bg-[#8ba6e8]" />
        <span className="h-[6px] w-px bg-[#8ba6e8]" />
        <span className="h-[6px] w-px bg-[#8ba6e8]" />
      </div>
      <div className="w-[50px]" />
      <ScrollButton label="right" turn="-rotate-90" />
      <div className="w-[2px]" />
    </div>
    <div className="w-[17px] shrink-0" />
  </div>
);

const App: React.FC = () => {
  return (
    <div className="flex h-screen w-full flex-col overflow-hidden bg-[#ece9d8] font-['Liberation_Sans','Noto_Sans_CJK_SC',sans-serif]">
      <MenuBar />
      <StandardBar />
      <LayerBar />

      <main className="relative flex min-h-0 flex-1">
        <div className="w-[29px] shrink-0 pl-px">
          <div className="flex flex-col border-l border-[#aca899] pb-[35px] pl-px pt-[2px]">
            <div className="flex w-[25px] flex-col items-center border-b border-l border-r border-b-[#aca899] border-l-white border-r-[#aca899] pb-[5px]">
              <div className="w-full">
                <RowGrip />
              </div>
              {LEFT_TOOLS.map((n) => <ToolButton key={n} name={n} />)}
            </div>
          </div>
        </div>

        <div className="mt-px flex min-w-0 flex-1 flex-col border-l-2 border-t-2 border-[#716f64]">
          <div className="flex min-h-0 flex-1">
            <div className="min-w-0 flex-1 overflow-hidden bg-black">
              <Drawing />
            </div>
            <div className="flex w-[17px] shrink-0 flex-col items-center bg-[#f6f5f0]">
              <ScrollButton label="up" turn="rotate-180" />
              <div className="flex-[214]" />
              <div className="flex h-4 w-4 shrink-0 flex-col items-center justify-center gap-px rounded-sm border border-white bg-[#c3d3fd]">
                <span className="h-px w-[7px] bg-[#8ba6e8]" />
                <span className="h-px w-[7px] bg-[#8ba6e8]" />
                <span className="h-px w-[7px] bg-[#8ba6e8]" />
                <span className="h-px w-[7px] bg-[#8ba6e8]" />
              </div>
              <div className="flex-[260]" />
              <ScrollButton label="down" turn="" />
            </div>
          </div>
          <LayoutTabs />
        </div>

        <div className="w-5 shrink-0 overflow-hidden border-l border-[#aca899] pl-px pt-[2px]">
          <div className="border-b border-l border-b-[#aca899] border-l-white pb-[5px]">
            <RowGrip />
            {RIGHT_TOOLS.map((group, i) => (
              <div key={i}>
                {i > 0 && (
                  <div className="flex h-[6px] items-center pl-[2px]">
                    <div className="h-[2px] w-full border-b border-t border-b-white border-t-[#aca899]" />
                  </div>
                )}
                <div className="pl-[3px]">
                  {group.map((n) => <ToolButton key={n} name={n} small />)}
                </div>
              </div>
            ))}
          </div>
        </div>

        <div className="absolute right-0 top-[370px] flex w-[86px] gap-[3px] overflow-hidden pl-px">
          <label
            htmlFor="dyn"
            className="flex h-[18px] w-[42px] shrink-0 items-center border border-[#b8b8d0] bg-[#14145a] pl-px font-['Liberation_Mono','Noto_Sans_CJK_SC',monospace] text-[12px] text-white"
          >
            命令:
          </label>
          <input
            id="dyn"
            defaultValue="1609.49"
            className="h-[18px] w-[60px] shrink-0 border-2 border-[#d8d8e4] bg-[#316ac5] px-0 font-['Liberation_Mono',monospace] text-[11px] text-white outline-none"
          />
        </div>
      </main>

      <footer className="shrink-0 border-t border-white pt-1">
        <div className="h-3 border-b border-t border-black" />
        <div className="h-[23px] overflow-hidden border-b border-[#aca899] bg-white pt-px font-['Liberation_Mono','Noto_Sans_CJK_SC',monospace] text-[12px] leading-[14px] text-black">
          <p className="-ml-[3px]">: _open</p>
        </div>
        <input aria-label="命令" className="block h-[3px] w-full bg-white outline-none" />
      </footer>
    </div>
  );
};

export default App;
